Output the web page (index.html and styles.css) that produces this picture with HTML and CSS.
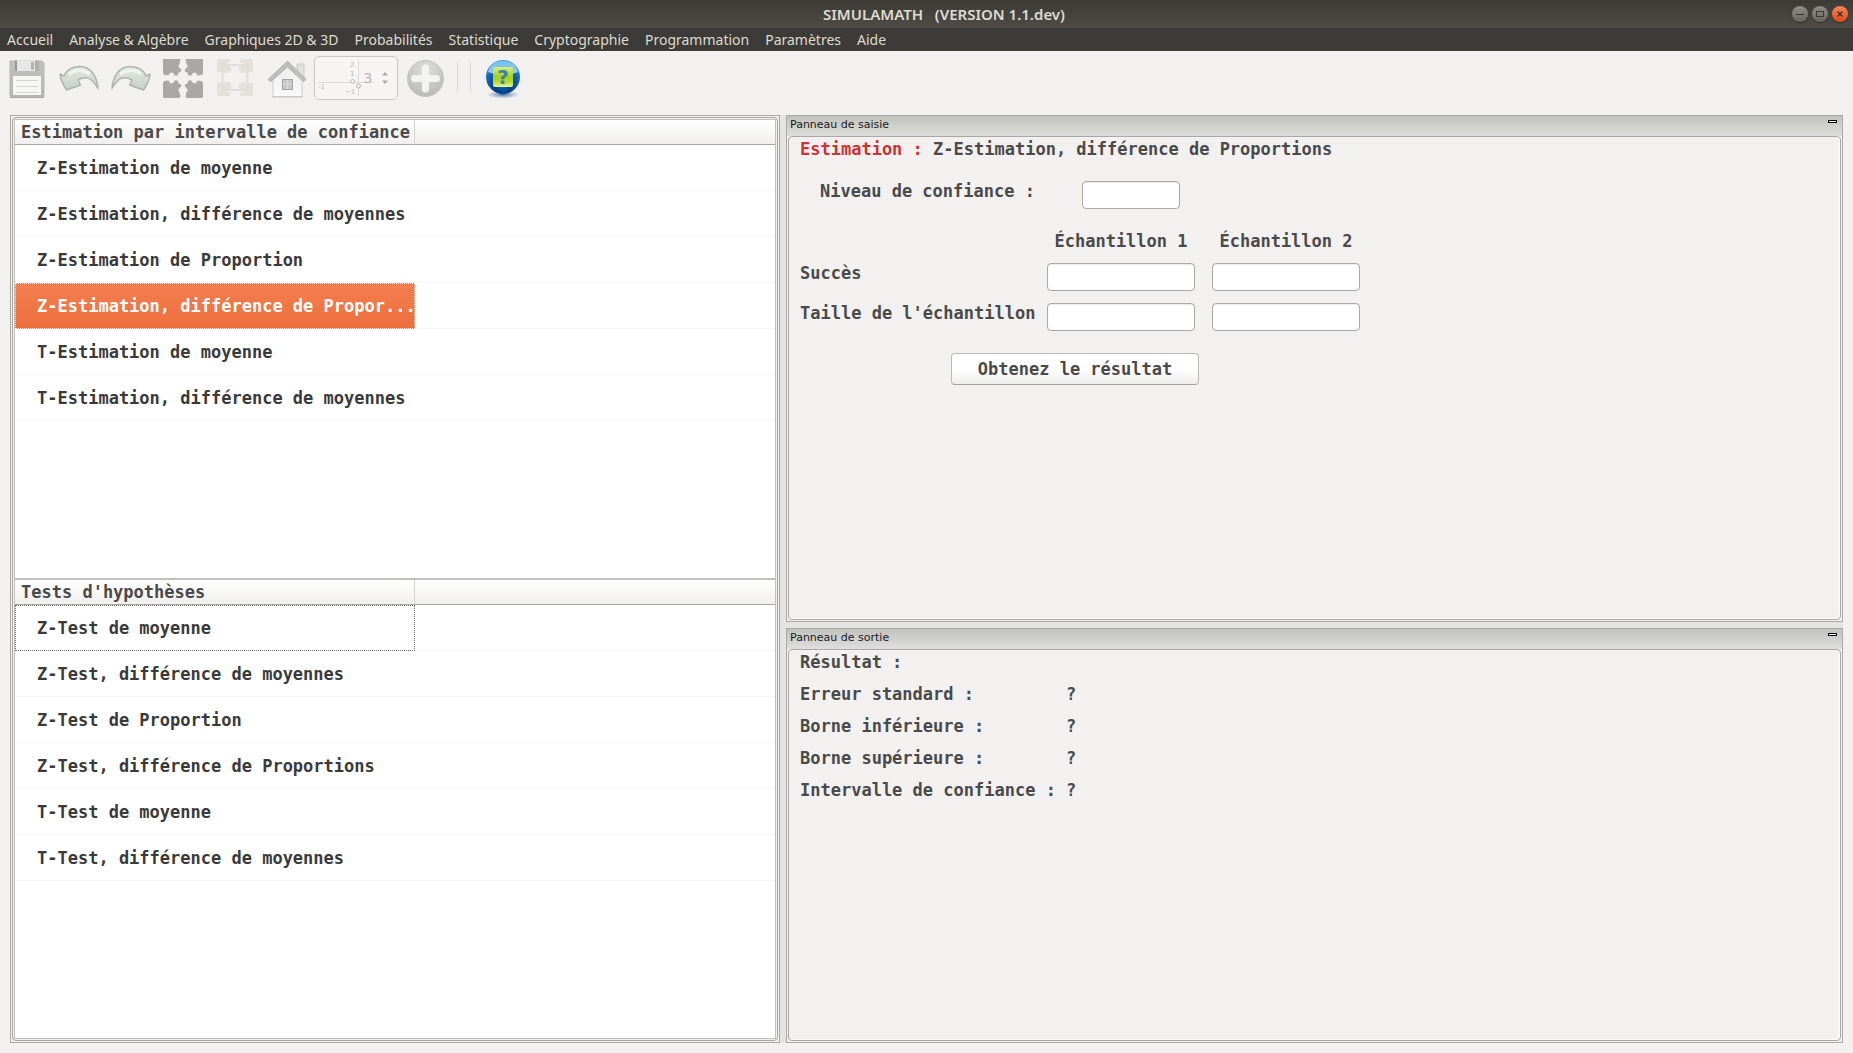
FILE: index.html
```html
<!DOCTYPE html>
<html lang="fr">
<head>
<meta charset="utf-8">
<title>SIMULAMATH (VERSION 1.1.dev)</title>
<link rel="stylesheet" href="styles.css">
</head>
<body>
<header class="titlebar">
  <h1 class="title">SIMULAMATH &nbsp; (VERSION 1.1.dev)</h1>
  <div class="window-buttons">
    <button class="wbtn" aria-label="Réduire"><svg viewBox="0 0 16 16"><path d="M4 8.500h8" stroke="#3c3b37"/></svg></button>
    <button class="wbtn" aria-label="Agrandir"><svg viewBox="0 0 16 16"><rect x="4.500" y="5.500" width="7" height="5" fill="none" stroke="#3c3b37"/></svg></button>
    <button class="wbtn wbtn-close" aria-label="Fermer"><svg viewBox="0 0 16 16"><path d="M5.500 5.500l5 5m0-5l-5 5" stroke="#3c2a1e" stroke-width="1.300"/></svg></button>
  </div>
</header>
<nav class="menubar">
  <a href="#">Accueil</a><a href="#">Analyse &amp; Algèbre</a><a href="#">Graphiques 2D &amp; 3D</a><a href="#">Probabilités</a><a href="#">Statistique</a><a href="#">Cryptographie</a><a href="#">Programmation</a><a href="#">Paramètres</a><a href="#">Aide</a>
</nav>

<svg class="defs" width="0" height="0" aria-hidden="true">
  <defs>
    <linearGradient id="floppy" x1="0" y1="0" x2="0" y2="1"><stop offset="0" stop-color="#c0c1c0"/><stop offset="1" stop-color="#b4b5b3"/></linearGradient>
    <linearGradient id="leaf" x1="0" y1="0" x2="0" y2="1"><stop offset="0" stop-color="#e3e8e2"/><stop offset="1" stop-color="#c5d0c5"/></linearGradient>
    <linearGradient id="wall" x1="0" y1="0" x2="0" y2="1"><stop offset="0" stop-color="#ededec"/><stop offset="1" stop-color="#fafafa"/></linearGradient>
    <radialGradient id="disc" cx="50%" cy="25%" r="75%"><stop offset="0" stop-color="#dededd"/><stop offset="1" stop-color="#b9bab8"/></radialGradient>
    <radialGradient id="ball" cx="50%" cy="78%" r="75%"><stop offset="0" stop-color="#0a63b8"/><stop offset=".3" stop-color="#063d83"/><stop offset=".7" stop-color="#1569b6"/><stop offset="1" stop-color="#3b9de0"/></radialGradient>
    <linearGradient id="shine" x1="0" y1="0" x2="0" y2="1"><stop offset="0" stop-color="#7fcbf7"/><stop offset="1" stop-color="#bfe3f8"/></linearGradient>
    <linearGradient id="lime" x1="0" y1="0" x2="0" y2="1"><stop offset="0" stop-color="#d4ee84"/><stop offset=".5" stop-color="#a3cf1c"/><stop offset=".75" stop-color="#b5dc2e"/><stop offset="1" stop-color="#e9f6a0"/></linearGradient>
    <radialGradient id="shadow"><stop offset="0" stop-color="#44689c"/><stop offset="1" stop-color="#9fb2cf" stop-opacity=".2"/></radialGradient>
    <path id="corner" d="M1 0H15.500L17.500 1 16.500 6 15 8 18.500 12 17.500 14 15.500 14.500 15 17 12.500 18 9.500 14.500 7 15 5.500 17.500 1.500 17 0 15.500V1Z"/>
    <path id="corner-small" d="M1 0H13V4H8.500C13 5 15.500 9 14 12 11 16 6 14 5 9V13H0V1Z"/>
  </defs>
</svg>

<div class="toolbar">
  <button class="tool" aria-label="Enregistrer"><svg viewBox="0 0 40 40">
    <path d="M3 2H35L37 4V38H3V3Z" fill="url(#floppy)" stroke="#b6b7b5"/>
    <path d="M10 1.500H28V12H10Z" fill="#e6e7e6"/><path d="M8 1.500h2V12H8z" fill="#989998"/><path d="M28 1.500h4V12h-4z" fill="#adaeac"/>
    <rect x="24" y="3" width="3" height="7.500" fill="#b0b1af"/>
    <rect x="6" y="17" width="28" height="19" rx="1" fill="#f6f6f5"/>
    <path d="M9 21.500H31M9 27.500H31M9 33.500H31" stroke="#d3d4d3"/>
    <path d="M3 38.500H37" stroke="#a8a9a7"/></svg></button>
  <button class="tool" aria-label="Annuler"><svg viewBox="0 0 40 40">
    <path d="M1 15Q1.500 22 7.500 31L21.500 26 19 21C27 16 33 19 39 29.500 38 16 31 7.500 21 7.500 13 7.500 7 11.500 5 17Z" fill="url(#leaf)" stroke="#aeb3ae" stroke-width="1.500" stroke-linejoin="round"/>
    <path d="M10 15Q19 8 31 15" fill="none" stroke="#f1f3f0" stroke-width="3"/></svg></button>
  <button class="tool" aria-label="Rétablir"><svg viewBox="0 0 40 40"><g transform="translate(40 0) scale(-1 1)">
    <path d="M1 15Q1.500 22 7.500 31L21.500 26 19 21C27 16 33 19 39 29.500 38 16 31 7.500 21 7.500 13 7.500 7 11.500 5 17Z" fill="url(#leaf)" stroke="#aeb3ae" stroke-width="1.500" stroke-linejoin="round"/>
    <path d="M10 15Q19 8 31 15" fill="none" stroke="#f1f3f0" stroke-width="3"/></g></svg></button>
  <button class="tool" aria-label="Plein écran"><svg viewBox="0 0 40 40" fill="#a9a8a5">
    <use href="#corner" transform="translate(0 -1)"/><use href="#corner" transform="translate(40 -1) scale(-1 1)"/>
    <use href="#corner" transform="translate(0 39) scale(1 -1)"/><use href="#corner" transform="translate(40 39) scale(-1 -1)"/></svg></button>
  <button class="tool" aria-label="Ajuster"><svg viewBox="0 0 40 40">
    <g fill="#e4e2d8"><use href="#corner-small" transform="translate(2 0)"/><use href="#corner-small" transform="translate(38 0) scale(-1 1)"/>
    <use href="#corner-small" transform="translate(2 37) scale(1 -1)"/><use href="#corner-small" transform="translate(38 37) scale(-1 -1)"/></g>
    <rect x="7.500" y="6" width="25" height="25" fill="none" stroke="#dddddb" stroke-width="2"/></svg></button>
  <button class="tool" aria-label="Accueil"><svg viewBox="0 0 40 40">
    <path d="M30 5h7v14l-7-5z" fill="#e1e1e0" stroke="#c9cac8"/>
    <path d="M6 20L20 6 35 20V37.500H6Z" fill="url(#wall)" stroke="#cfcfce"/><path d="M5 38H36" stroke="#c3c4c2"/>
    <path d="M1 20.500L20.500 2 39 20.500 36.500 22.500 20.500 8 4 22.500Z" fill="#bdbebc" stroke="#b1b2b0"/>
    <rect x="15.500" y="20.500" width="10" height="10" fill="#c6c9cb" stroke="#a3a5a5"/><path d="M20.500 21V30M16 25.500h9" stroke="#dcdddd"/></svg></button>
  <label class="axis-box"><svg class="axis-picture" viewBox="0 0 56 38" aria-hidden="true">
    <path d="M0 23.500H56M40.500 1V37" stroke="#dadad9"/>
    <g class="axis-text"><text x="0" y="30">-1</text><text x="32" y="8">2</text><text x="32" y="17">1</text><text x="27" y="35">−1</text></g>
    <circle cx="34.500" cy="22.500" r="2" fill="#f7f7f6" stroke="#b5b5b4"/><circle cx="40.500" cy="27" r="2" fill="#f7f7f6" stroke="#b5b5b4"/></svg>
    <input class="axis-value" value="3" aria-label="Axes">
    <svg class="arrows" viewBox="0 0 8 14"><path d="M1 4.500L4 1 7 4.500ZM1 9.500H7L4 13Z" fill="#a9a9a7"/></svg></label>
  <button class="tool" aria-label="Ajouter"><svg viewBox="0 0 40 40">
    <circle cx="20.500" cy="19.500" r="18" fill="url(#disc)" stroke="#c2c3c1"/>
    <path d="M20.500 9V30M9.500 19.500H31.500" stroke="#f3f3f2" stroke-width="7" stroke-linecap="round"/></svg></button>
  <span class="separators"></span>
  <button class="tool" aria-label="Aide"><svg viewBox="0 0 40 40">
    <ellipse cx="20" cy="35.500" rx="15" ry="4" fill="url(#shadow)"/>
    <circle cx="20" cy="18" r="17" fill="url(#ball)"/>
    <path d="M5 13C7 5 13 2 20 2s13 3 15 11Q20 19 5 13Z" fill="url(#shine)" opacity=".8"/>
    <rect x="10" y="8" width="20" height="20" rx="2" fill="url(#lime)"/>
    <text class="help-mark" x="20" y="25" text-anchor="middle">?</text></svg></button>
</div>

<main class="workspace">
  <section class="frame left-frame"><div class="inner lists">
    <div class="list">
      <table>
        <thead><tr><th class="name-col">Estimation par intervalle de confiance</th><th></th></tr></thead>
        <tbody>
          <tr><td>Z-Estimation de moyenne</td><td></td></tr>
          <tr><td>Z-Estimation, différence de moyennes</td><td></td></tr>
          <tr><td>Z-Estimation de Proportion</td><td></td></tr>
          <tr><td class="selected">Z-Estimation, différence de Propor...</td><td></td></tr>
          <tr><td>T-Estimation de moyenne</td><td></td></tr>
          <tr><td>T-Estimation, différence de moyennes</td><td></td></tr>
        </tbody>
      </table>
    </div>
    <div class="list">
      <table>
        <thead><tr><th class="name-col">Tests d'hypothèses</th><th></th></tr></thead>
        <tbody>
          <tr><td class="focused">Z-Test de moyenne</td><td></td></tr>
          <tr><td>Z-Test, différence de moyennes</td><td></td></tr>
          <tr><td>Z-Test de Proportion</td><td></td></tr>
          <tr><td>Z-Test, différence de Proportions</td><td></td></tr>
          <tr><td>T-Test de moyenne</td><td></td></tr>
          <tr><td>T-Test, différence de moyennes</td><td></td></tr>
        </tbody>
      </table>
    </div>
  </div></section>

  <div class="right">
    <section class="frame dock">
      <div class="dock-title"><h2>Panneau de saisie</h2><button class="dock-min" aria-label="Réduire le panneau"></button></div>
      <form class="inner dock-body">
        <p class="heading"><span class="red">Estimation :</span> Z-Estimation, différence de Proportions</p>
        <div class="grid level">
          <label class="indent" for="niveau">Niveau de confiance :</label><input class="field short" id="niveau">
        </div>
        <div class="grid samples">
          <span></span><span class="col-head">Échantillon 1</span><span class="col-head">Échantillon 2</span>
          <label for="s1">Succès</label><input class="field" id="s1"><input class="field" aria-label="Succès, échantillon 2">
          <label for="t1">Taille de l'échantillon</label><input class="field" id="t1"><input class="field" aria-label="Taille de l'échantillon 2">
        </div>
        <button class="submit" type="button">Obtenez le résultat</button>
      </form>
    </section>
    <section class="frame dock">
      <div class="dock-title"><h2>Panneau de sortie</h2><button class="dock-min" aria-label="Réduire le panneau"></button></div>
      <div class="inner dock-body">
        <p>Résultat :</p>
        <dl class="results">
          <dt>Erreur standard :</dt><dd>?</dd>
          <dt>Borne inférieure :</dt><dd>?</dd>
          <dt>Borne supérieure :</dt><dd>?</dd>
          <dt>Intervalle de confiance :</dt><dd>?</dd>
        </dl>
      </div>
    </section>
  </div>
</main>
</body>
</html>
```
FILE: styles.css
```css
* { box-sizing: border-box; }
html, body { margin: 0; }
body {
  min-height: 100vh;
  display: flex;
  flex-direction: column;
  background: #f2f1ef;
  color: #4a4a4a;
  font: bold 17px/20px "DejaVu Sans Mono", monospace;
}
p, h1, h2, dl, dd { margin: 0; font-weight: inherit; }
button, input { font: inherit; color: inherit; padding: 0; }

/* Title bar and menu */
.titlebar {
  height: 28px;
  display: grid;
  grid-template-columns: 1fr auto 1fr;
  align-items: center;
  padding: 0 5px 0 40px;
  background: linear-gradient(#3c3b37, #4e4c45);
  color: #dfdbd2;
}
.title { grid-column: 2; font: 600 15px/20px "Noto Sans", sans-serif; }
.window-buttons { display: flex; gap: 4px; justify-content: flex-end; }
.wbtn {
  width: 16px;
  height: 16px;
  border: 0;
  border-radius: 50%;
  background: linear-gradient(#8f8e88, #66655f);
  box-shadow: 0 1px 1px #2c2b28;
}
.wbtn-close { background: linear-gradient(#f58556, #df4a16); }
.wbtn svg { display: block; width: 16px; height: 16px; }
.menubar {
  height: 23px;
  display: flex;
  gap: 16px;
  padding: 0 7px;
  background: #3c3b37;
  font: 14px/23px "Noto Sans", sans-serif;
}
.menubar a { color: #dfdbd2; text-decoration: none; white-space: nowrap; }

/* Toolbar */
.defs { position: absolute; }
.toolbar { height: 64px; display: flex; align-items: flex-start; gap: 12px; padding: 8px 7px; }
.tool { width: 40px; height: 40px; border: 0; background: none; flex: none; }
.tool svg { display: block; width: 40px; height: 40px; }
.axis-box {
  width: 84px;
  height: 44px;
  display: flex;
  align-items: center;
  margin: -3px -5px 0;
  padding: 0 8px 0 3px;
  border: 1px solid #c9c8c5;
  border-radius: 5px;
  background: #f6f5f4;
}
.axis-picture { width: 56px; height: 38px; flex: none; margin-right: -10px; }
.axis-text { font: 7px "DejaVu Sans", sans-serif; fill: #b5b5b4; }
.axis-value {
  width: 16px;
  border: 0;
  background: none;
  color: #b3b2b0;
  font: 14px/20px "Noto Sans", sans-serif;
  flex: none;
}
.arrows { width: 8px; height: 14px; margin-left: auto; }
.separators {
  width: 14px;
  height: 30px;
  margin: 3px 0;
  border: solid #dbdad8;
  border-width: 0 1px;
}
.help-mark { font: bold 20px "DejaVu Sans", sans-serif; fill: #3f7fae; }

/* Panels */
.workspace {
  flex: 1;
  display: grid;
  grid-template-columns: 770fr 1057fr;
  padding: 0 10px 10px;
}
.workspace, .right { gap: 6px; }
.right { display: grid; grid-template-rows: 507fr 415fr; }
.workspace { background: linear-gradient(#e4e4e2, #e4e4e2) content-box; }
.frame {
  display: flex;
  flex-direction: column;
  min-width: 0;
  padding: 1px;
  border: 1px solid #a9a8a5;
  background: #f2f1ef;
}
.inner { flex: 1; border: 1px solid #a9a8a5; border-radius: 4px; }

.lists { display: flex; flex-direction: column; padding: 1px; background: #f2f1ef; }
.list { flex: 1; border: solid #c4bfba; border-width: 1px 1px 0; background: #fff; }
.list + .list { border-top-width: 2px; border-bottom-width: 1px; }
table { width: 100%; table-layout: fixed; border-collapse: separate; border-spacing: 0; }
th, td { padding: 0; font-weight: bold; text-align: left; white-space: nowrap; }
th {
  height: 25px;
  padding-left: 6px;
  border-bottom: 1px solid #a9a8a5;
  background: linear-gradient(#fff, #f0efed);
}
.name-col { width: 400px; border-right: 1px solid #d3d2d0; }
td { height: 46px; padding-left: 22px; border-bottom: 1px solid #f6f6f6; color: #3a3a3a; }
td.selected {
  border: 1px dotted #fbe3d8;
  padding-left: 21px;
  background: linear-gradient(#f47e4f, #ec6f3c);
  color: #fff;
}
td.focused { border: 1px dotted #6b6b6b; padding-left: 21px; }

.dock-title {
  height: 20px;
  display: flex;
  justify-content: space-between;
  margin: -1px -1px 0;
  padding: 0 5px 0 3px;
  background: linear-gradient(#c1c1be, #dededc);
  color: #1a1a1a;
}
.dock-title h2 { font: 11px/18px "DejaVu Sans", sans-serif; }
.dock-min { width: 9px; height: 3px; margin-top: 4px; border: 1px solid #000; background: #fff; }
.dock-body { padding: 2px 11px; box-shadow: inset -1px -1px #fbfbfa; }
.red { color: #cc3333; }
.grid {
  display: grid;
  grid-template-columns: 230px 148px 148px;
  column-gap: 17px;
  align-items: start;
  white-space: nowrap;
}
.indent { padding-left: 20px; }
.level { margin-top: 22px; }
.samples { row-gap: 12px; margin-top: 22px; }
.col-head { text-align: center; }
.field {
  width: 100%;
  height: 28px;
  padding: 0 6px;
  border: 1px solid #aca8a3;
  border-radius: 4px;
  background: #fff;
  box-shadow: inset 0 1px 1px #ebebea;
}
.short { width: 98px; margin-left: 35px; }
.submit {
  display: block;
  width: 248px;
  height: 32px;
  margin: 22px 0 0 151px;
  border: 1px solid #bcbab6;
  border-bottom-color: #a5a29e;
  border-radius: 4px;
  background: linear-gradient(#fff 50%, #eeedec);
}
.results { display: grid; grid-template-columns: 266px 1fr; row-gap: 12px; margin-top: 12px; }
```
